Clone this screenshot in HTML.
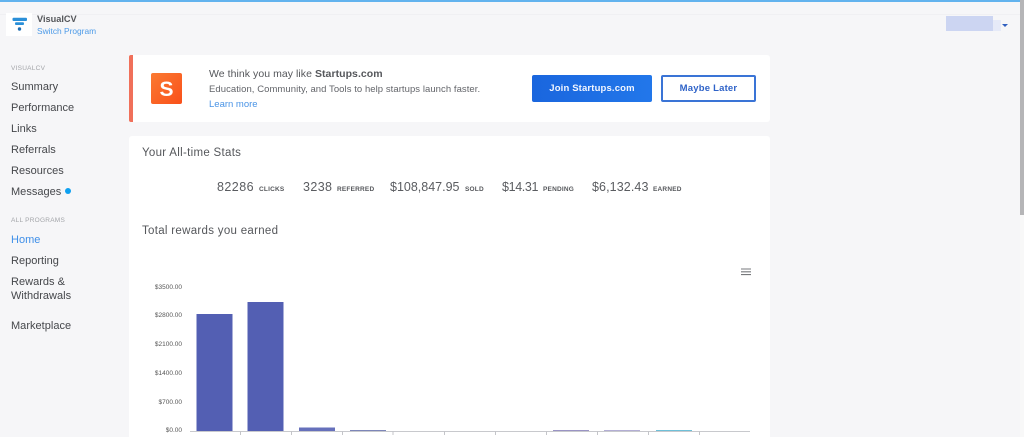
<!DOCTYPE html>
<html>
<head>
<meta charset="utf-8">
<style>
html,body{margin:0;padding:0;width:1024px;height:437px;overflow:hidden;background:#f6f6f8;font-family:"Liberation Sans",sans-serif;color:#47494d}
.a{position:absolute;white-space:nowrap;line-height:1}
.nav{left:11px;font-size:11px;letter-spacing:.02px;color:#45474b}
.lab{left:11px;font-size:6.5px;color:#a3a5a9;letter-spacing:.25px}
.v{font-size:12.5px;color:#5a5c60;top:181px}
.s{font-size:6.5px;font-weight:bold;color:#55575b;top:187px;letter-spacing:.2px}
.y{font-size:6.5px;color:#555;text-align:right;width:50px;left:132px}
</style>
</head>
<body>
<div class="a" style="left:0;top:0;width:1020px;height:2px;background:#62b3ee"></div>
<div class="a" style="left:0;top:14px;width:1020px;height:1px;background:#f0f0f3"></div>
<div class="a" style="left:1020px;top:0;width:4px;height:215px;background:#b5b5b7"></div>
<div class="a" style="left:1020px;top:215px;width:4px;height:222px;background:#f8f8f8"></div>

<div class="a" style="left:6px;top:13px;width:26px;height:23px;background:#fff"></div>
<svg class="a" style="left:12px;top:16px" width="16" height="16" viewBox="0 0 16 16">
<rect x="0.500" y="1.700" width="14.500" height="3.300" rx="1" fill="#2a8fd8"/>
<rect x="3" y="6.300" width="9" height="2.700" rx="1" fill="#2a8fd8"/>
<circle cx="7.500" cy="13" r="1.700" fill="#1f6fb5"/>
</svg>
<div class="a" style="left:37px;top:15px;font-size:9.200px;font-weight:bold;color:#54565a">VisualCV</div>
<div class="a" style="left:37px;top:27px;font-size:8.400px;color:#4d9be8">Switch Program</div>

<div class="a" style="left:946px;top:16px;width:47px;height:15px;background:#ccd5f2"></div>
<div class="a" style="left:993px;top:20px;width:8px;height:11px;background:#e6eaf8"></div>
<div class="a" style="left:1001.500px;top:23.500px;width:0;height:0;border-left:3.500px solid transparent;border-right:3.500px solid transparent;border-top:3.500px solid #2f5fc0"></div>

<div class="a lab" style="top:66px">VISUALCV</div>
<div class="a nav" style="top:82px">Summary</div>
<div class="a nav" style="top:103px">Performance</div>
<div class="a nav" style="top:124px">Links</div>
<div class="a nav" style="top:145px">Referrals</div>
<div class="a nav" style="top:166px">Resources</div>
<div class="a nav" style="top:187px">Messages</div>
<div class="a" style="left:65px;top:188px;width:6px;height:6px;border-radius:50%;background:#0ea0f0"></div>
<div class="a lab" style="top:218px">ALL PROGRAMS</div>
<div class="a nav" style="top:235px;color:#3f8fe8">Home</div>
<div class="a nav" style="top:256px">Reporting</div>
<div class="a nav" style="top:277px">Rewards &amp;</div>
<div class="a nav" style="top:291px">Withdrawals</div>
<div class="a nav" style="top:321px">Marketplace</div>

<div class="a" style="left:129px;top:55px;width:641px;height:67px;background:#fff;border-radius:3px"></div>
<div class="a" style="left:129px;top:55px;width:4px;height:67px;background:#f0705a;border-radius:2px 0 0 2px"></div>
<div class="a" style="left:151px;top:73px;width:31px;height:31px;border-radius:2px;background:linear-gradient(135deg,#fb7a32,#f9501a);color:#fff;font-weight:bold;font-size:21px;line-height:33px;text-align:center">S</div>
<div class="a" style="left:209px;top:69px;font-size:10.500px;color:#55575b;letter-spacing:.05px">We think you may like <b>Startups.com</b></div>
<div class="a" style="left:209px;top:85px;font-size:9.500px;color:#63656a;letter-spacing:.06px">Education, Community, and Tools to help startups launch faster.</div>
<div class="a" style="left:209px;top:100px;font-size:9.500px;color:#4a94e6;letter-spacing:0">Learn more</div>
<div class="a" style="left:532px;top:75px;width:120px;height:27px;border-radius:2px;background:linear-gradient(90deg,#1a66de,#2277ea);color:#f2f6ff;font-weight:bold;font-size:9.500px;line-height:27px;text-align:center;letter-spacing:.15px">Join Startups.com</div>
<div class="a" style="left:661px;top:75px;width:91px;height:23px;border:2px solid #3a74d6;border-radius:2px;background:#fff;color:#2f63c8;font-weight:bold;font-size:9.500px;line-height:23px;text-align:center;letter-spacing:.2px">Maybe Later</div>

<div class="a" style="left:129px;top:136px;width:641px;height:301px;background:#fff;border-radius:3px 3px 0 0"></div>
<div class="a" style="left:142px;top:148px;font-size:11.500px;color:#55575b;letter-spacing:.3px">Your All-time Stats</div>
<div class="a v" style="left:217px;letter-spacing:.45px">82286</div>
<div class="a s" style="left:259px">CLICKS</div>
<div class="a v" style="left:303px;letter-spacing:.4px">3238</div>
<div class="a s" style="left:337px">REFERRED</div>
<div class="a v" style="left:390px;letter-spacing:0">$108,847.95</div>
<div class="a s" style="left:465px">SOLD</div>
<div class="a v" style="left:502px;letter-spacing:-.35px">$14.31</div>
<div class="a s" style="left:543px">PENDING</div>
<div class="a v" style="left:592px;letter-spacing:.1px">$6,132.43</div>
<div class="a s" style="left:653px">EARNED</div>
<div class="a" style="left:142px;top:226px;font-size:11.500px;color:#55575b;letter-spacing:.3px">Total rewards you earned</div>

<svg class="a" style="left:741px;top:268px" width="10" height="8" viewBox="0 0 10 8">
<path d="M0 1H10M0 3.800H10M0 6.600H10" stroke="#77797c" stroke-width="1.100"/>
</svg>

<div class="a y" style="top:285px">$3500.00</div>
<div class="a y" style="top:313px">$2800.00</div>
<div class="a y" style="top:342px">$2100.00</div>
<div class="a y" style="top:371px">$1400.00</div>
<div class="a y" style="top:400px">$700.00</div>
<div class="a y" style="top:428px">$0.00</div>

<svg class="a" style="left:0;top:0" width="1024" height="437" viewBox="0 0 1024 437">
<rect x="196.500" y="314" width="36" height="117" fill="#535fb3"/>
<rect x="247.500" y="302" width="36" height="129" fill="#535fb3"/>
<rect x="299" y="427.500" width="36" height="3.500" fill="#6670bb"/>
<rect x="350" y="430" width="36" height="1" fill="#7d86b8"/>
<rect x="553" y="430" width="36" height="1" fill="#9a94c4"/>
<rect x="604" y="430" width="36" height="1" fill="#b3aed4"/>
<rect x="656" y="430" width="36" height="1.200" fill="#6fc0d8"/>
<path d="M190 431.500H750" stroke="#c8c9cd" stroke-width="1"/>
<path d="M240.500 431V435M291.500 431V435M342.500 431V435M393 431V435M444.500 431V435M495.500 431V435M546.500 431V435M597.500 431V435M648.500 431V435M699.500 431V435" stroke="#c4c5c9" stroke-width="1"/>
</svg>
</body>
</html>
